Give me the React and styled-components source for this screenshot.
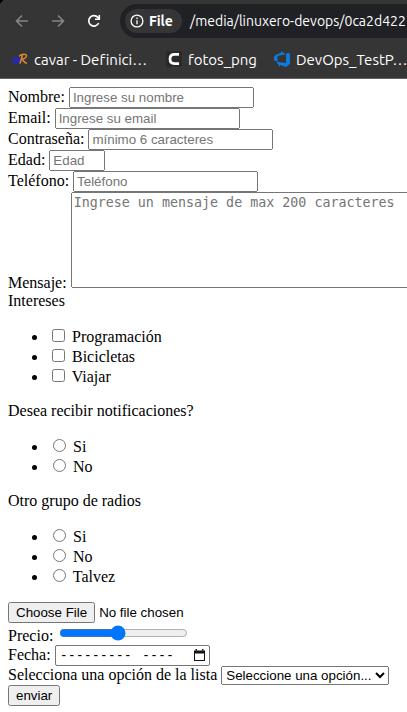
import React from "react";
import styled, { createGlobalStyle } from "styled-components";

const GlobalStyle = createGlobalStyle`
  html, body { margin: 0; background: #fff; overflow: hidden; }
`;

const Window = styled.div`
  width: 100vw;
  height: 100vh;
  overflow: hidden;
  background: #fff;
`;

const Chrome = styled.header`
  height: 79px;
  box-sizing: border-box;
  overflow: hidden;
  background: linear-gradient(135deg, #000 0 2px, #353535 3px);
  border-bottom: 1px solid #666;
  color: #fff;
  font-family: "Ubuntu", "Noto Sans", sans-serif;
`;

const Toolbar = styled.div`
  display: flex;
  align-items: center;
  height: 42px;
`;

const NavIcon = styled.svg`
  flex: none;
  width: 16px;
  height: 16px;
  margin-left: ${(p) => p.$gap}px;
  fill: none;
  stroke: ${(p) => p.$color};
  stroke-width: 1.6;
`;

const AddressBar = styled.div`
  display: flex;
  align-items: center;
  flex: none;
  width: 400px;
  height: 34px;
  margin-left: 18px;
  padding-left: 5px;
  box-sizing: border-box;
  border-radius: 17px;
  background: #202124;
`;

const SchemeChip = styled.span`
  display: flex;
  align-items: center;
  gap: 5px;
  width: 57px;
  height: 24px;
  padding-left: 5px;
  box-sizing: border-box;
  border-radius: 12px;
  background: #353535;
  font-size: 14px;
  font-weight: 700;
  letter-spacing: -0.1px;
`;

const Url = styled.span`
  margin-left: 8px;
  font-size: 14px;
  white-space: nowrap;
`;

const Bookmarks = styled.nav`
  display: flex;
  align-items: center;
  height: 34px;
  padding-left: 12px;
`;

const Bookmark = styled.span`
  display: flex;
  align-items: center;
  flex: none;
  width: ${(p) => p.$width}px;
  font-size: 15px;
  font-variant-ligatures: none;
  white-space: nowrap;
`;

const BookmarkIcon = styled.svg`
  flex: none;
  width: 16px;
  height: 16px;
  margin-right: 6px;
`;

const Form = styled.form`
  padding: 8px;
  font-family: "Liberation Serif", serif;
  font-size: 16px;
  color: #000;
`;

const Line = styled.div`
  white-space: nowrap;
`;

const Field = styled.input`
  font-family: "Liberation Sans", sans-serif;
  font-size: 13.3333px;
  ${(p) => (p.$width ? `width: ${p.$width}px; box-sizing: border-box;` : "")}
`;

const Message = styled.textarea`
  font-family: "DejaVu Sans Mono", monospace;
  font-size: 13.3333px;
  resize: none;
`;

const MonthField = styled.span`
  display: inline-flex;
  align-items: center;
  box-sizing: border-box;
  width: 155px;
  height: 21px;
  padding: 0 3px 0 4px;
  border: 1px solid #767676;
  border-radius: 2px;
  background: #fff;
  font-family: "DejaVu Sans Mono", monospace;
  font-size: 13.3333px;
  line-height: 15px;
`;

const YearPart = styled.span`
  margin-left: 10px;
`;

const CalendarIcon = styled.svg`
  width: 13px;
  height: 13px;
  margin-left: auto;
`;

const Choice = styled.select`
  font-family: "Liberation Sans", sans-serif;
  font-size: 13.3333px;
`;

const Submit = styled.button`
  font-family: "Liberation Sans", sans-serif;
  font-size: 13.3333px;
`;

const Options = styled.ul`
  margin: 16px 0;
  padding-left: 40px;
`;

const Option = styled.li`
  height: 20px;
`;

function OptionGroup({ type, name, labels }) {
  return (
    <Options>
      {labels.map((label) => (
        <Option key={label}>
          <input type={type} name={name} /> {label}
        </Option>
      ))}
    </Options>
  );
}

export default function App() {
  return (
    <Window>
      <GlobalStyle />
      <Chrome>
        <Toolbar>
          <NavIcon viewBox="0 0 16 16" $gap={14} $color="#858585">
            <path d="M14 8H3M8 2.5L2.5 8 8 13.5" />
          </NavIcon>
          <NavIcon viewBox="0 0 16 16" $gap={20} $color="#858585">
            <path d="M2 8h11M8 2.5L13.5 8 8 13.5" />
          </NavIcon>
          <NavIcon viewBox="0 0 16 16" $gap={20} $color="#fff">
            <path d="M12.7 10a5.2 5.2 0 1 1-.7-5.4L13.3 6M13.3 2v4.2H9" />
          </NavIcon>
          <AddressBar>
            <SchemeChip>
              <svg width="14" height="14" viewBox="0 0 14 14" fill="none" stroke="#fff" strokeWidth="1.3">
                <circle cx="7" cy="7" r="5.9" />
                <path d="M7 6.2v4M7 3.6v1.4" />
              </svg>
              File
            </SchemeChip>
            <Url>/media/linuxero-devops/0ca2d422</Url>
          </AddressBar>
        </Toolbar>
        <Bookmarks>
          <Bookmark $width={154}>
            <BookmarkIcon viewBox="0 0 16 16" fill="none">
              <path d="M.8 6l1.3 6L4.3 7l1.5 5 2-6" stroke="#2222e8" strokeWidth="1.4" />
              <path d="M10.5 4L8 12.6M7 5.4C9 2.8 15 2.6 14.4 5 14 7.5 11 8 9.2 8c2.2 0 2.3 4.5 5.8 3.9" stroke="#e08a2c" strokeWidth="1.5" />
            </BookmarkIcon>
            cavar - Definici…
          </Bookmark>
          <Bookmark $width={108}>
            <BookmarkIcon viewBox="0 0 16 16">
              <path d="M0 0h16v16H0z" fill="#292929" />
              <path d="M13 3.4H8.5C5.2 3.4 4 5.3 4 8s1.3 4.6 4.5 4.6H13" fill="none" stroke="#fff" strokeWidth="2.7" />
            </BookmarkIcon>
            fotos_png
          </Bookmark>
          <Bookmark $width={140}>
            <BookmarkIcon viewBox="0 0 16 16" fill="#0b7bdc">
              <path d="M0 5.8L1.5 3.9 7 1.8V0l4.8 3.3L3.5 5v5.6L0 9.4zM16 3.1v9.7L12.2 16 6 14v2l-3.6-5.2 9.6 1.1V3.2l2-1.6z" />
            </BookmarkIcon>
            DevOps_TestP…
          </Bookmark>
        </Bookmarks>
      </Chrome>
      <Form onSubmit={(e) => e.preventDefault()}>
        <Line>Nombre: <Field type="text" placeholder="Ingrese su nombre" $width={185} /></Line>
        <Line>Email: <Field type="email" placeholder="Ingrese su email" $width={185} /></Line>
        <Line>Contraseña: <Field type="password" placeholder="mínimo 6 caracteres" $width={185} /></Line>
        <Line>Edad: <Field type="number" placeholder="Edad" $width={56} /></Line>
        <Line>Teléfono: <Field type="tel" placeholder="Teléfono" $width={185} /></Line>
        <Line>Mensaje: <Message rows={6} cols={50} placeholder="Ingrese un mensaje de max 200 caracteres" /></Line>
        <Line>Intereses</Line>
        <OptionGroup type="checkbox" name="intereses" labels={["Programación", "Bicicletas", "Viajar"]} />
        <Line>Desea recibir notificaciones?</Line>
        <OptionGroup type="radio" name="notificaciones" labels={["Si", "No"]} />
        <Line>Otro grupo de radios</Line>
        <OptionGroup type="radio" name="grupo" labels={["Si", "No", "Talvez"]} />
        <Line><Field type="file" /></Line>
        <Line>Precio: <Field type="range" min="0" max="100" defaultValue="45" /></Line>
        <Line>
          Fecha:{" "}
          <MonthField tabIndex={0}>
            <span>---------</span>
            <YearPart>----</YearPart>
            <CalendarIcon viewBox="0 0 13 13">
              <path d="M1 1.5h11V12H1zM2 4.5V11h9V4.5z" fill="#111" fillRule="evenodd" />
              <path d="M2.5 0H4v1.5H2.5zM9 0h1.5v1.5H9z" fill="#111" />
            </CalendarIcon>
          </MonthField>
        </Line>
        <Line>
          Selecciona una opción de la lista{" "}
          <Choice defaultValue="">
            <option value="">Seleccione una opción...</option>
          </Choice>
        </Line>
        <Line><Submit type="submit">enviar</Submit></Line>
      </Form>
    </Window>
  );
}
